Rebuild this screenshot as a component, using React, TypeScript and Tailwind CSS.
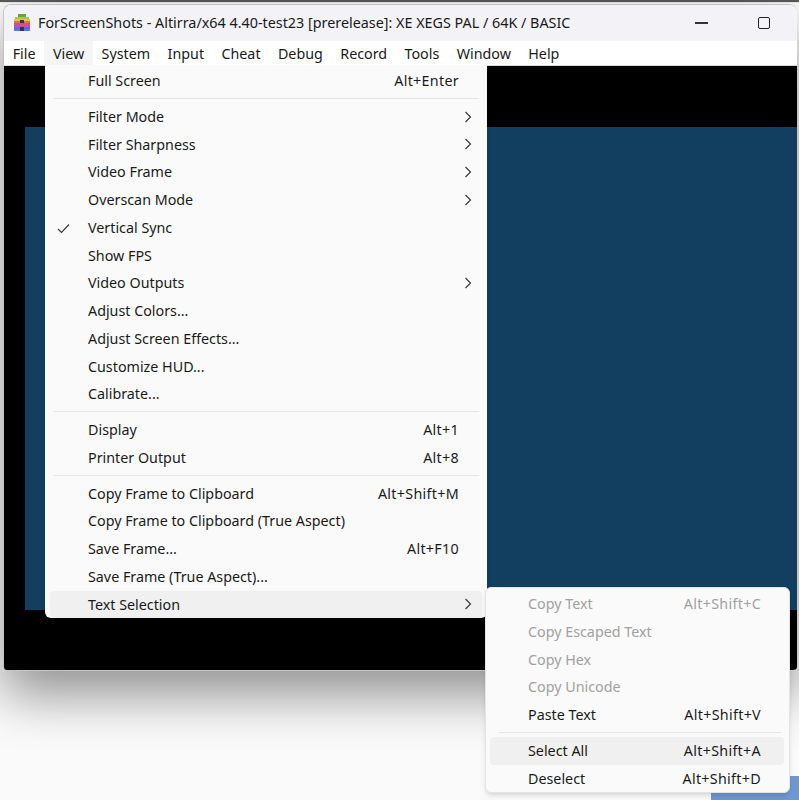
const menuNames = ["File", "View", "System", "Input", "Cheat", "Debug", "Record", "Tools", "Window", "Help"];

type Item = { label?: string; keys?: string; sub?: boolean; check?: boolean; off?: boolean; hot?: boolean; sep?: boolean };

const viewItems: Item[] = [
  { label: "Full Screen", keys: "Alt+Enter" },
  { sep: true },
  { label: "Filter Mode", sub: true },
  { label: "Filter Sharpness", sub: true },
  { label: "Video Frame", sub: true },
  { label: "Overscan Mode", sub: true },
  { label: "Vertical Sync", check: true },
  { label: "Show FPS" },
  { label: "Video Outputs", sub: true },
  { label: "Adjust Colors..." },
  { label: "Adjust Screen Effects..." },
  { label: "Customize HUD..." },
  { label: "Calibrate..." },
  { sep: true },
  { label: "Display", keys: "Alt+1" },
  { label: "Printer Output", keys: "Alt+8" },
  { sep: true },
  { label: "Copy Frame to Clipboard", keys: "Alt+Shift+M" },
  { label: "Copy Frame to Clipboard (True Aspect)" },
  { label: "Save Frame...", keys: "Alt+F10" },
  { label: "Save Frame (True Aspect)..." },
  { label: "Text Selection", sub: true, hot: true },
];

const textItems: Item[] = [
  { label: "Copy Text", keys: "Alt+Shift+C", off: true },
  { label: "Copy Escaped Text", off: true },
  { label: "Copy Hex", off: true },
  { label: "Copy Unicode", off: true },
  { label: "Paste Text", keys: "Alt+Shift+V" },
  { sep: true },
  { label: "Select All", keys: "Alt+Shift+A", hot: true },
  { label: "Deselect", keys: "Alt+Shift+D" },
];

const AppIcon = () => (
  <svg width="20" height="20" viewBox="0 0 20 20" className="shrink-0">
    <rect x="6" y="1" width="8" height="3" fill="#5fa83a" />
    <rect x="3" y="4" width="14" height="2" fill="#b8c23c" />
    <rect x="2" y="6" width="16" height="2" fill="#e8c04a" />
    <rect x="2" y="8" width="16" height="2" fill="#e0705a" />
    <rect x="2" y="10" width="16" height="2" fill="#d84a8a" />
    <rect x="2" y="12" width="16" height="2" fill="#a855c8" />
    <rect x="2" y="14" width="16" height="2" fill="#6a63d8" />
    <rect x="2" y="16" width="6" height="2" fill="#4a7fd8" />
    <rect x="12" y="16" width="6" height="2" fill="#4a7fd8" />
    <rect x="8" y="7" width="4" height="3" fill="#3a3048" />
    <rect x="8" y="14" width="4" height="4" fill="#3a3048" />
  </svg>
);

const Chevron = () => (
  <svg width="8" height="12" viewBox="0 0 8 12" fill="none" stroke="#333" strokeWidth="1.1">
    <path d="M1.5 1 L6.5 6 L1.5 11" />
  </svg>
);

const Menu = ({ items, className }: { items: Item[]; className: string }) => (
  <div className={className}>
    {items.map((it, i) =>
      it.sep ? (
        <div key={i} className="h-2 pt-[3px] px-[8px]">
          <div className="h-px bg-[#e6e6e6]"></div>
        </div>
      ) : (
        <div
          key={i}
          className={`h-[27.75px] mx-[5px] pl-[38px] pr-[10px] flex items-center justify-between rounded relative ${it.hot ? "bg-[#f0f0f0]" : ""} ${it.off ? "text-[#a0a0a0]" : "text-[#1a1a1a]"}`}
        >
          {it.check && (
            <svg width="13" height="11" viewBox="0 0 13 11" fill="none" stroke="#333" strokeWidth="1.1" className="absolute left-[7px] top-[9px]">
              <path d="M1 6 L4.5 9.5 L12 1.5" />
            </svg>
          )}
          <span>{it.label}</span>
          {it.keys && <span className="pr-[13px] tracking-[0.3px]">{it.keys}</span>}
          {it.sub && <Chevron />}
        </div>
      )
    )}
  </div>
);

export default function App() {
  return (
    <div className="relative w-[799px] h-[800px] overflow-hidden bg-[#fafafa] font-['Noto_Sans',sans-serif] text-[14.3px] text-[#1a1a1a]">
      <div className="h-[2px] bg-[#5a5a5a]"></div>
      <div className="h-[1px] bg-[#e8e8e8]"></div>
      <div className="absolute left-[711px] top-[776px] w-[88px] h-[24px] bg-[#7098d0]"></div>

      <div className="relative ml-[3px] mt-[1px] w-[794px] h-[667px] rounded-t-lg rounded-b flex flex-col overflow-hidden border border-[#c4c4c4] border-r-0 shadow-[0_24px_52px_rgba(0,0,0,0.42)]">
        <div className="h-[36px] bg-[#f3f2f7] flex items-center pl-[8px] shrink-0">
          <AppIcon />
          <span className="ml-[6px] text-[14.35px]">ForScreenShots - Altirra/x64 4.40-test23 [prerelease]: XE XEGS PAL / 64K / BASIC</span>
          <div className="ml-auto flex items-center">
            <div className="w-[13px] h-[2px] bg-[#333] mr-[50px]"></div>
            <div className="w-[12px] h-[12px] border border-[#222] rounded-[2px] mr-[27px]"></div>
          </div>
        </div>
        <div className="h-[25px] bg-white border-b border-[#d8d8d8] flex items-center shrink-0">
          {menuNames.map((name) => (
            <div key={name} className={`px-[8.7px] pt-[1px] h-full flex items-center ${name === "View" ? "bg-[#f5f5f5]" : ""}`}>
              {name}
            </div>
          ))}
        </div>
        <div className="flex-1 bg-black pt-[61px] pl-[21px]">
          <div className="h-[483px] bg-[#123f5f]"></div>
        </div>
      </div>

      <Menu
        items={viewItems}
        className="absolute left-[45px] top-[65px] w-[442px] h-[553px] pt-[2px] bg-[#fafafa] rounded-b-md shadow-md"
      />
      <Menu
        items={textItems}
        className="absolute left-[485px] top-[587px] w-[305px] h-[206px] pt-[2px] bg-[#fafafa] rounded-md border border-[#e4e4e4] shadow-md [&>div]:ml-[4px]"
      />
    </div>
  );
}
